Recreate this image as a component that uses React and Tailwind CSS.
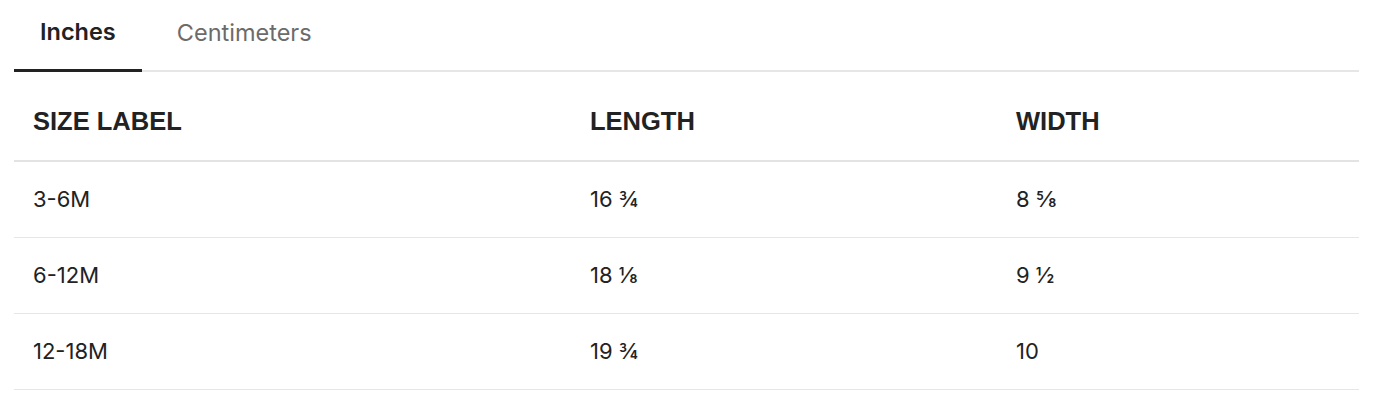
import React from "react";

const rows = [
  ["3-6M", "16 ¾", "8 ⅝"],
  ["6-12M", "18 ⅛", "9 ½"],
  ["12-18M", "19 ¾", "10"],
];

export default function App() {
  return (
    <div className="w-[1384px] h-[406px] bg-white text-[#222]" style={{ fontFamily: "Inter, 'Noto Sans', sans-serif" }}>
      <div className="ml-[14px] w-[1345px]">
        <div className="flex border-b-2 border-[#e6e6e6]">
          <button className="relative -mb-[2px] px-[26px] pt-[18px] pb-[23px] border-b-[3px] border-[#222] text-[23.5px] leading-[28px] font-semibold text-[#222]">
            Inches
          </button>
          <button className="ml-[9px] px-[26px] pt-[18px] pb-[23px] text-[23.5px] leading-[28px] text-[#6b6b6b]">
            Centimeters
          </button>
        </div>
        <div className="grid grid-cols-[557px_426px_1fr] border-b-2 border-[#e3e3e3]" style={{ fontFamily: "'Liberation Sans', Arial, sans-serif" }}>
          {["SIZE LABEL", "LENGTH", "WIDTH"].map((h) => (
            <div key={h} className="pl-[19px] pt-[34px] pb-[24px] text-[25.5px] leading-[30px] font-bold text-[#222]">
              {h}
            </div>
          ))}
        </div>
        {rows.map((r) => (
          <div key={r[0]} className="grid grid-cols-[557px_426px_1fr] border-b border-[#e6e6e6]">
            {r.map((c, i) => (
              <div key={i} className="pl-[19px] pt-[23px] pb-[24px] text-[22px] leading-[28px] text-[#222]">
                {c}
              </div>
            ))}
          </div>
        ))}
      </div>
    </div>
  );
}
